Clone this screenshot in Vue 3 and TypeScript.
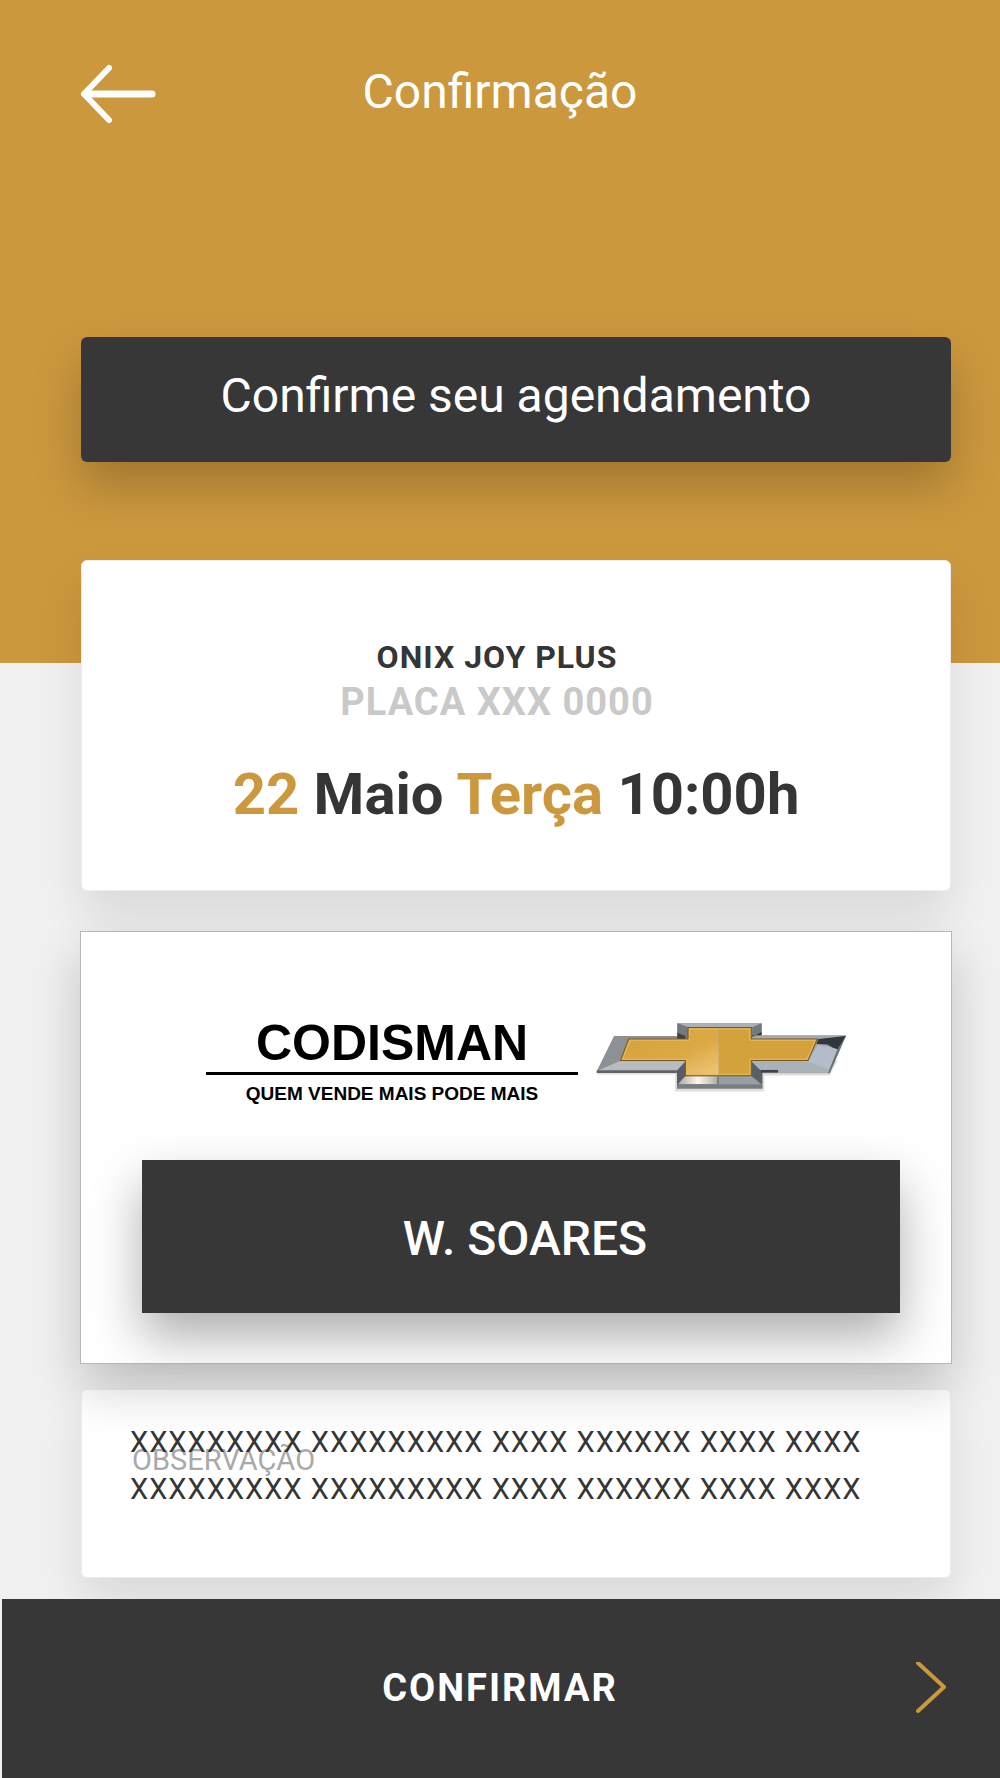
<script setup lang="ts">
import { ref } from 'vue'

interface Booking {
  model: string
  plate: string
  day: string
  month: string
  weekday: string
  time: string
  consultant: string
}

const booking: Booking = {
  model: 'ONIX JOY PLUS',
  plate: 'PLACA XXX 0000',
  day: '22',
  month: 'Maio',
  weekday: 'Terça',
  time: '10:00h',
  consultant: 'W. SOARES',
}

const notes = ref(
  'XXXXXXXXX XXXXXXXXX XXXX XXXXXX XXXX XXXX\nXXXXXXXXX XXXXXXXXX XXXX XXXXXX XXXX XXXX',
)
</script>

<template>
  <div class="page">
    <header class="header">
      <button class="back" type="button" aria-label="Voltar">
        <svg width="76" height="60" viewBox="0 0 76 60" fill="none" stroke="#fff" stroke-linecap="round" stroke-linejoin="round">
          <path d="M29 4 4 30 29 56" stroke-width="6" />
          <path d="M5 30H72" stroke-width="7" />
        </svg>
      </button>
      <h1 class="title">Confirmação</h1>
    </header>

    <main class="content">
      <h2 class="banner">Confirme seu agendamento</h2>

      <section class="card schedule">
        <div class="vehicle">
          <p class="model">{{ booking.model }}</p>
          <p class="plate">{{ booking.plate }}</p>
        </div>
        <p class="date">
          <span class="accent">{{ booking.day }}</span> {{ booking.month }}
          <span class="accent">{{ booking.weekday }}</span> {{ booking.time }}
        </p>
      </section>

      <section class="dealer">
        <div class="brand">
          <div class="brand-text">
            <p class="brand-name">CODISMAN</p>
            <p class="brand-tagline">QUEM VENDE MAIS PODE MAIS</p>
          </div>
          <svg class="emblem" width="252" height="73" viewBox="50 64 750 216" role="img" aria-label="Chevrolet">
            <defs>
              <linearGradient id="chrome" x1="0" y1="0" x2="0" y2="1">
                <stop offset="0" stop-color="#8c9095" />
                <stop offset=".35" stop-color="#a4a9ae" />
                <stop offset=".7" stop-color="#b7bcc1" />
                <stop offset="1" stop-color="#73777a" />
              </linearGradient>
              <linearGradient id="goldLeft" x1="0" y1="0" x2="1" y2="1">
                <stop offset="0" stop-color="#d3a03a" />
                <stop offset=".6" stop-color="#dca945" />
                <stop offset="1" stop-color="#efc77c" />
              </linearGradient>
              <linearGradient id="steel" x1="0" y1="0" x2="1" y2="0">
                <stop offset="0" stop-color="#a9a7a2" />
                <stop offset=".5" stop-color="#fff8e9" />
                <stop offset="1" stop-color="#b1aaa0" />
              </linearGradient>
            </defs>
            <path d="M54 218H290V269H546V221H742L764 180" fill="none" stroke="#000" stroke-opacity=".13" stroke-width="9" />
            <path d="M104 108H292V70H543V106H794L740 219H545V264H291V217H52Z" fill="url(#chrome)" />
            <path d="M104 108H292V117H146L122 182 52 213Z" fill="#8d9196" />
            <path d="M122 184H316L291 211H58Z" fill="#b7bcc1" />
            <path d="M52 210H291V218H52Z" fill="#606467" />
            <path d="M292 70H543L515 82H325Z" fill="#a9b2b9" />
            <path d="M292 70 325 82V116H292Z" fill="#74797e" />
            <path d="M292 98 316 108V117H292Z" fill="#3e4246" />
            <path d="M515 82 543 70V97L515 110Z" fill="#74797d" />
            <path d="M515 110 543 96V106H515Z" fill="#32373b" />
            <path d="M543 107H794L788 119H515V112Z" fill="#a3abb1" />
            <path d="M291 211 316 184V228L291 257Z" fill="#595e63" />
            <path d="M316 228H413V251H294Z" fill="url(#steel)" />
            <path d="M413 228H513L540 252H413Z" fill="#989fa3" />
            <path d="M413 230V251" stroke="#656a6d" stroke-width="4" />
            <path d="M513 184 545 215V252L513 228Z" fill="#596066" />
            <path d="M291 253H545V264H291Z" fill="#777d81" />
            <path d="M515 184H678L746 207 740 214H545Z" fill="#a9b2b9" />
            <path d="M540 209H592V217H540Z" fill="#3d4347" />
            <path d="M712 117 794 108 768 150 738 133 706 132Z" fill="#30363b" />
            <path d="M711 134 768 147 745 207 681 184Z" fill="#b3bdc7" />
            <path d="M794 108 768 150 740 219 746 219Z" fill="#6b7177" />
            <path d="M147 117H324V83H415V226H316V181H123Z" fill="url(#goldLeft)" />
            <path d="M415 83H512V117H709L681 181H512V226H415Z" fill="#d4a23d" />
            <path d="M147 117H324V83H512V117H709L681 181H512V226H316V181H123Z" fill="none" stroke="#765327" stroke-width="3" />
            <path d="M151 121H328V87H508V121H702L678 177H508V222H320V177H129Z" fill="none" stroke="#e8bd55" stroke-width="3" />
          </svg>
        </div>
        <button class="consultant" type="button">{{ booking.consultant }}</button>
      </section>

      <section class="card notes">
        <label class="notes-label" for="notes">OBSERVAÇÃO</label>
        <textarea id="notes" v-model="notes" class="notes-input" rows="2" spellcheck="false"></textarea>
      </section>
    </main>

    <footer class="footer">
      <button class="confirm" type="button">
        <span class="confirm-text">CONFIRMAR</span>
        <svg class="chevron" width="32" height="54" viewBox="0 0 32 54" fill="none" stroke="#cc983e" stroke-width="4" stroke-linecap="round" stroke-linejoin="round">
          <path d="M4 1 30 25 4 49" />
        </svg>
      </button>
    </footer>
  </div>
</template>

<style>
body {
  margin: 0;
}
</style>

<style scoped>
.page {
  display: flex;
  flex-direction: column;
  box-sizing: border-box;
  min-height: 100vh;
  background: linear-gradient(#cc983e 663px, #f1f1f1 663px);
  color: #353535;
  font-family: Roboto, 'Liberation Sans', sans-serif;
}

h1,
h2,
p {
  margin: 0;
}

button {
  border: 0;
  padding: 0;
  font-family: inherit;
  cursor: pointer;
}

.header {
  display: grid;
  grid-template-columns: 76px 1fr 76px;
  align-items: center;
  padding: 60px 80px 0;
}

.back {
  display: block;
  height: 64px;
  padding-top: 4px;
  background: none;
}

.title {
  color: #fff;
  font-size: 48px;
  font-weight: 400;
  line-height: 64px;
  text-align: center;
}

.content {
  display: flex;
  flex: 1;
  flex-direction: column;
  padding: 213px 49px 21px 81px;
}

.banner {
  border-radius: 6px;
  padding: 27px 0 34px;
  background: #373737;
  box-shadow: 0 24px 48px rgba(0, 0, 0, 0.22);
  color: #fff;
  font-size: 48px;
  font-weight: 400;
  line-height: 64px;
  text-align: center;
}

.card {
  border: 1px solid #ececec;
  border-radius: 6px;
  background: #fff;
  box-shadow: 0 24px 48px rgba(0, 0, 0, 0.1);
}

.schedule {
  margin-top: 98px;
  padding: 74px 0 61px;
  text-align: center;
}

.vehicle {
  padding-right: 38px;
  font-weight: 700;
  letter-spacing: 1px;
}

.model {
  font-size: 32px;
  line-height: 44px;
}

.plate {
  color: #c9c9c9;
  font-size: 38px;
  line-height: 46px;
}

.date {
  margin-top: 34px;
  font-size: 58px;
  font-weight: 700;
  line-height: 70px;
}

.accent {
  color: #cc983e;
}

.dealer {
  position: relative;
  z-index: 1;
  margin: 40px -1px 0;
  border: 1px solid #b7b7b7;
  padding: 78px 51px 50px 61px;
  background: #fff;
  box-shadow: 0 24px 48px rgba(0, 0, 0, 0.2);
}

.brand {
  display: flex;
  align-items: flex-start;
  justify-content: center;
  gap: 18px;
  padding-left: 12px;
}

.brand-text {
  width: 372px;
  color: #000;
  font-family: 'Liberation Sans', Arial, sans-serif;
  font-weight: 700;
  text-align: center;
}

.brand-name {
  border-bottom: 3px solid #000;
  padding-top: 4px;
  font-size: 50px;
  line-height: 58px;
}

.brand-tagline {
  margin-top: 5px;
  font-size: 19px;
  line-height: 28px;
}

.emblem {
  flex: none;
  margin-top: 11px;
}

.consultant {
  display: block;
  width: 100%;
  margin-top: 52px;
  padding: 4px 0 0 8px;
  background: #373737;
  box-shadow: 0 24px 48px rgba(0, 0, 0, 0.32);
  color: #fff;
  font-size: 48px;
  font-weight: 500;
  line-height: 149px;
}

.notes {
  position: relative;
  margin-top: 25px;
  padding: 29px 50px 46px 48px;
}

.notes-label {
  position: absolute;
  top: 50px;
  left: 50px;
  color: #a9a9a9;
  font-size: 29px;
  line-height: 40px;
}

.notes-input {
  position: relative;
  display: block;
  box-sizing: border-box;
  width: 100%;
  height: 112px;
  border: 0;
  padding: 0;
  outline: 0;
  background: none;
  color: #353535;
  font-family: inherit;
  font-size: 29px;
  letter-spacing: 1px;
  line-height: 47px;
  overflow: hidden;
  resize: none;
}

.footer {
  position: relative;
  z-index: 2;
  padding-left: 2px;
}

.confirm {
  display: grid;
  grid-template-columns: 32px 1fr 32px;
  align-items: center;
  width: 100%;
  padding: 0 54px 0 52px;
  background: #373737;
  color: #fff;
  font-size: 38px;
  font-weight: 700;
  letter-spacing: 2px;
  line-height: 179px;
}

.confirm-text {
  grid-column: 2;
}
</style>
